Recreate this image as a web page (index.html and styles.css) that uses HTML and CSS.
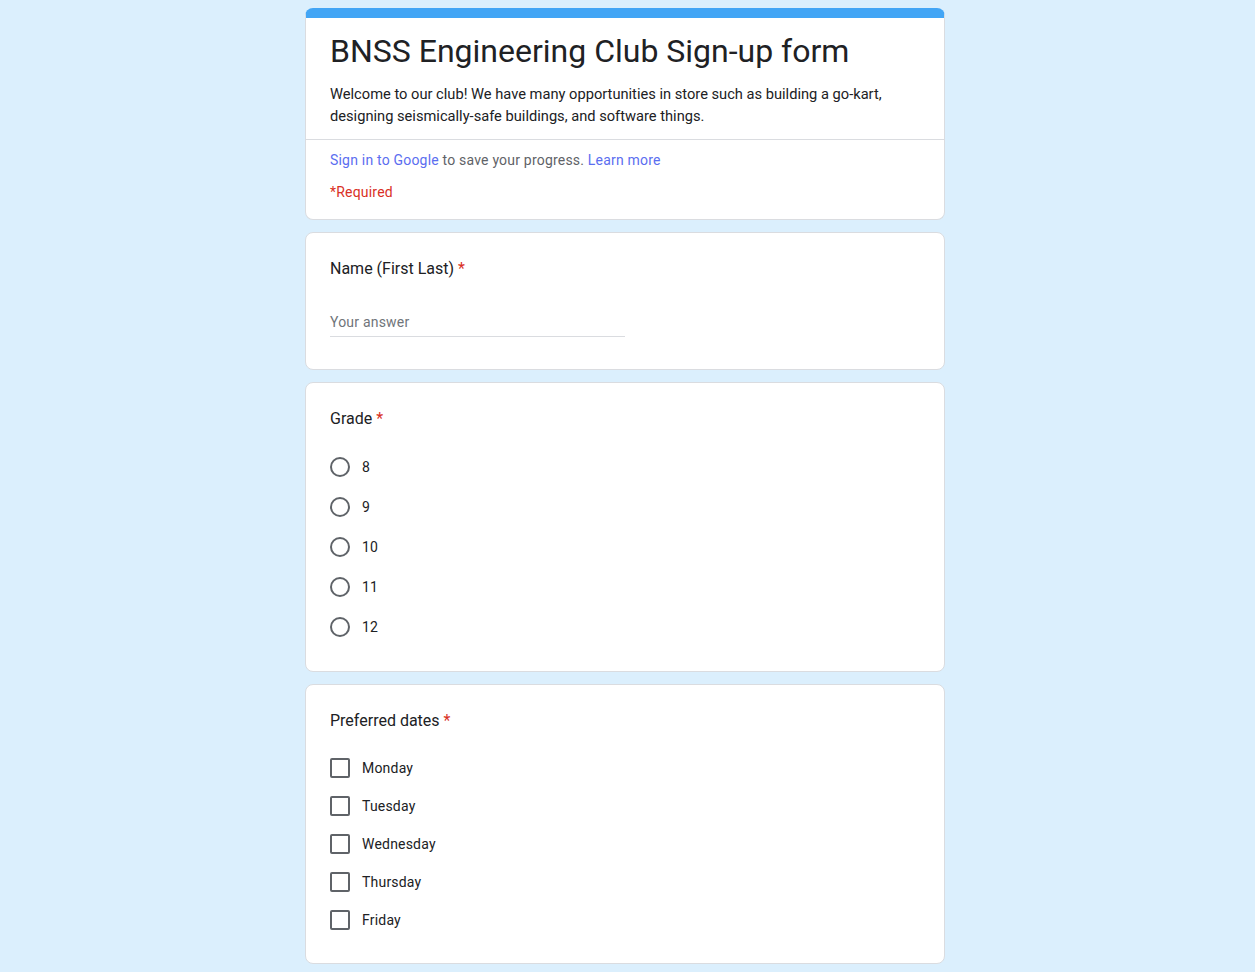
FILE: index.html
```html
<!DOCTYPE html>
<html lang="en">
<head>
<meta charset="utf-8">
<title>BNSS Engineering Club Sign-up form</title>
<link rel="stylesheet" href="styles.css">
</head>
<body>
<main class="form">
  <section class="card header-card">
    <div class="header-top">
      <h1 class="form-title">BNSS Engineering Club Sign-up form</h1>
      <p class="form-desc">Welcome to our club! We have many opportunities in store such as building a go-kart, designing seismically-safe buildings, and software things.</p>
    </div>
    <div class="header-bottom">
      <p class="signin"><a class="link" href="#">Sign in to Google</a> to save your progress. <a class="link" href="#">Learn more</a></p>
      <p class="required-note">*Required</p>
    </div>
  </section>

  <section class="card question">
    <div class="q-title">Name (First Last) <span class="star">*</span></div>
    <div class="text-input">Your answer</div>
  </section>

  <section class="card question">
    <div class="q-title">Grade <span class="star">*</span></div>
    <ul class="options radios">
      <li class="option"><span class="radio"></span><span class="opt-label">8</span></li>
      <li class="option"><span class="radio"></span><span class="opt-label">9</span></li>
      <li class="option"><span class="radio"></span><span class="opt-label">10</span></li>
      <li class="option"><span class="radio"></span><span class="opt-label">11</span></li>
      <li class="option"><span class="radio"></span><span class="opt-label">12</span></li>
    </ul>
  </section>

  <section class="card question">
    <div class="q-title">Preferred dates <span class="star">*</span></div>
    <ul class="options checks">
      <li class="option"><span class="checkbox"></span><span class="opt-label">Monday</span></li>
      <li class="option"><span class="checkbox"></span><span class="opt-label">Tuesday</span></li>
      <li class="option"><span class="checkbox"></span><span class="opt-label">Wednesday</span></li>
      <li class="option"><span class="checkbox"></span><span class="opt-label">Thursday</span></li>
      <li class="option"><span class="checkbox"></span><span class="opt-label">Friday</span></li>
    </ul>
  </section>
</main>
</body>
</html>
```
FILE: styles.css
```css
html, body {
  margin: 0;
  padding: 0;
}
body {
  background: #dbeffd;
  font-family: Roboto, "Liberation Sans", Arial, sans-serif;
  color: #202124;
  padding-right: 5px;
}
.form {
  width: 640px;
  margin: 0 auto;
  padding: 8px 0 8px;
  display: flex;
  flex-direction: column;
  gap: 12px;
}
.card {
  background: #fff;
  border: 1px solid #dadce0;
  border-radius: 8px;
  box-sizing: border-box;
}
.header-card {
  border-top: 10px solid #42a5f5;
}
.header-top {
  padding: 13px 24px 12px;
  border-bottom: 1px solid #dadce0;
}
.form-title {
  margin: 0;
  font-size: 32px;
  line-height: 40px;
  font-weight: 400;
  color: #202124;
}
.form-desc {
  margin: 12px 0 0;
  font-size: 14.66px;
  line-height: 22px;
  color: #202124;
}
.header-bottom {
  padding: 10px 24px 17px;
}
.signin {
  margin: 0;
  font-size: 14px;
  letter-spacing: 0.2px;
  line-height: 20px;
  color: #5f6368;
}
.link {
  color: #5b6ef0;
  text-decoration: none;
}
.required-note {
  margin: 12px 0 0;
  font-size: 14px;
  letter-spacing: 0.2px;
  line-height: 20px;
  color: #d93025;
}
.question {
  padding: 24px;
}
.q-title {
  font-size: 16px;
  line-height: 24px;
  color: #202124;
}
.star {
  color: #d93025;
}
.text-input {
  width: 50%;
  margin-top: 31px;
  margin-bottom: 8px;
  padding-bottom: 4px;
  border-bottom: 1px solid #dadce0;
  font-size: 14px;
  letter-spacing: 0.2px;
  line-height: 20px;
  color: #70757a;
}
.options {
  list-style: none;
  margin: 16px 0 0;
  padding: 0;
}
.option {
  display: flex;
  align-items: center;
  gap: 12px;
  font-size: 14px;
  letter-spacing: 0.2px;
  color: #202124;
}
.radios .option {
  height: 40px;
}
.checks .option {
  height: 38px;
}
.radio {
  width: 20px;
  height: 20px;
  box-sizing: border-box;
  border: 2px solid #5f6368;
  border-radius: 50%;
  flex: none;
}
.checkbox {
  width: 20px;
  height: 20px;
  box-sizing: border-box;
  border: 2px solid #5f6368;
  border-radius: 2px;
  flex: none;
}
.opt-label {
  line-height: 20px;
}
```
